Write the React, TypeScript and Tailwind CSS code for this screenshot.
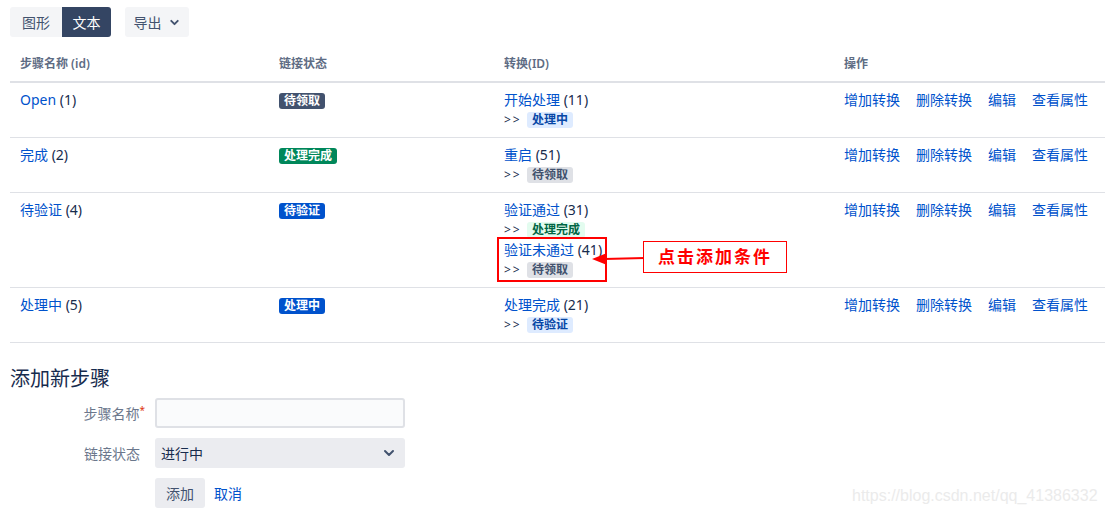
import { ChevronDown } from 'lucide-react'

type Lozenge = { label: string; tone: 'gray' | 'green' | 'blue' }

type Transition = { name: string; id: number; target: Lozenge }

type Step = { name: string; id: number; status: Lozenge; transitions: Transition[] }

const bold: Record<Lozenge['tone'], string> = {
  gray: 'bg-[#42526e] text-white',
  green: 'bg-[#00875a] text-white',
  blue: 'bg-[#0052cc] text-white',
}

const subtle: Record<Lozenge['tone'], string> = {
  gray: 'bg-[#dfe1e6] text-[#42526e]',
  green: 'bg-[#e3fcef] text-[#006644]',
  blue: 'bg-[#deebff] text-[#0747a6]',
}

const steps: Step[] = [
  {
    name: 'Open',
    id: 1,
    status: { label: '待领取', tone: 'gray' },
    transitions: [{ name: '开始处理', id: 11, target: { label: '处理中', tone: 'blue' } }],
  },
  {
    name: '完成',
    id: 2,
    status: { label: '处理完成', tone: 'green' },
    transitions: [{ name: '重启', id: 51, target: { label: '待领取', tone: 'gray' } }],
  },
  {
    name: '待验证',
    id: 4,
    status: { label: '待验证', tone: 'blue' },
    transitions: [
      { name: '验证通过', id: 31, target: { label: '处理完成', tone: 'green' } },
      { name: '验证未通过', id: 41, target: { label: '待领取', tone: 'gray' } },
    ],
  },
  {
    name: '处理中',
    id: 5,
    status: { label: '处理中', tone: 'blue' },
    transitions: [{ name: '处理完成', id: 21, target: { label: '待验证', tone: 'blue' } }],
  },
]

const actions = ['增加转换', '删除转换', '编辑', '查看属性']

const cols = 'grid grid-cols-[259px_225px_340px_1fr]'

function Badge({ lz, variant }: { lz: Lozenge; variant: 'bold' | 'subtle' }) {
  const tone = variant === 'bold' ? bold[lz.tone] : subtle[lz.tone]
  return (
    <span className={`inline-block rounded-[3px] px-[5px] text-[12px] leading-[16px] font-bold ${tone}`}>
      {lz.label}
    </span>
  )
}

export default function App() {
  return (
    <div
      className="relative w-[1105px] h-[514px] overflow-hidden bg-white pl-[10px] pt-[7px] text-[14px] text-[#172b4d]"
      style={{ fontFamily: '"Noto Sans", "Noto Sans CJK SC", sans-serif' }}
    >
      {/* toolbar */}
      <div className="flex items-center gap-[14px]">
        <div className="flex">
          <button className="h-[30px] w-[52px] rounded-l-[3px] bg-[#f4f5f7] text-[#42526e]">图形</button>
          <button className="h-[30px] w-[49px] rounded-r-[3px] bg-[#344563] text-white">文本</button>
        </div>
        <button className="flex h-[30px] w-[64px] items-center justify-center gap-[6px] rounded-[3px] bg-[#f4f5f7] text-[#42526e]">
          导出
          <ChevronDown size={13} strokeWidth={3.5} />
        </button>
      </div>

      {/* table */}
      <div className="mt-[10px]">
        <div className={`${cols} border-b-2 border-[#dfe1e6] text-[12px] font-semibold leading-[20px] text-[#5e6c84]`}>
          <div className="px-[10px] py-[7px]">步骤名称 (id)</div>
          <div className="px-[10px] py-[7px]">链接状态</div>
          <div className="px-[10px] py-[7px]">转换(ID)</div>
          <div className="px-[10px] py-[7px]">操作</div>
        </div>
        {steps.map((s) => (
          <div key={s.id} className={`${cols} border-b border-[#dfe1e6] leading-[20px]`}>
            <div className="px-[10px] py-[7px]">
              <a className="text-[#0052cc]">{s.name}</a> ({s.id})
            </div>
            <div className="px-[10px] py-[7px]">
              <Badge lz={s.status} variant="bold" />
            </div>
            <div className="px-[10px] py-[7px]">
              {s.transitions.map((t) => (
                <div key={t.id}>
                  <div>
                    <a className="text-[#0052cc]">{t.name}</a> ({t.id})
                  </div>
                  <div className="flex h-[20px] items-center">
                    <span className="w-[23px] text-[12px] tracking-[2px] text-[#172b4d]">&gt;&gt;</span>
                    <Badge lz={t.target} variant="subtle" />
                  </div>
                </div>
              ))}
            </div>
            <div className="flex gap-[16px] px-[10px] py-[7px] text-[#0052cc]">
              {actions.map((a) => (
                <a key={a}>{a}</a>
              ))}
            </div>
          </div>
        ))}
      </div>

      {/* add step form */}
      <h2 className="mt-[24px] text-[20px] leading-[24px] text-[#172b4d]">添加新步骤</h2>
      <div className="mt-[7px] grid grid-cols-[135px_250px] items-center gap-x-[10px] gap-y-[10px]">
        <label className="text-right text-[14px] text-[#6b778c]">
          步骤名称<span className="align-top text-[10px] text-[#de350b]">*</span>
        </label>
        <input className="h-[30px] rounded-[3px] border-2 border-[#dfe1e6] bg-[#fafbfc]" />
        <label className="pr-[5px] text-right text-[14px] text-[#6b778c]">链接状态</label>
        <div className="flex h-[30px] items-center justify-between rounded-[3px] bg-[#ebecf0] pl-[6px] pr-[8px] text-[#172b4d]">
          进行中
          <ChevronDown size={16} strokeWidth={3} className="text-[#42526e]" />
        </div>
        <div />
        <div className="flex items-center gap-[9px]">
          <button className="h-[30px] w-[50px] rounded-[3px] bg-[#ebecf0] text-[#42526e]">添加</button>
          <a className="text-[#0052cc]">取消</a>
        </div>
      </div>

      {/* annotation overlay */}
      <div className="absolute left-[497px] top-[237px] h-[45px] w-[110px] border-2 border-[#ff0000]" />
      <svg className="absolute left-[590px] top-[250px]" width="56" height="18" viewBox="0 0 56 18">
        <line x1="14" y1="9" x2="55" y2="8" stroke="#ff0000" strokeWidth="2" />
        <polygon points="2,9 17,3 17,15" fill="#ff0000" />
      </svg>
      <div className="absolute left-[643px] top-[241px] flex h-[32px] w-[144px] items-center justify-center border border-[#ff0000] bg-white text-[17px] font-bold tracking-[2px] text-[#ff0000]">
        点击添加条件
      </div>

      {/* watermark */}
      <div
        className="absolute left-[852px] top-[484px] text-[16px] text-[#ebebeb]"
        style={{ fontFamily: '"Liberation Sans", sans-serif' }}
      >
        https://blog.csdn.net/qq_41386332
      </div>
    </div>
  )
}
